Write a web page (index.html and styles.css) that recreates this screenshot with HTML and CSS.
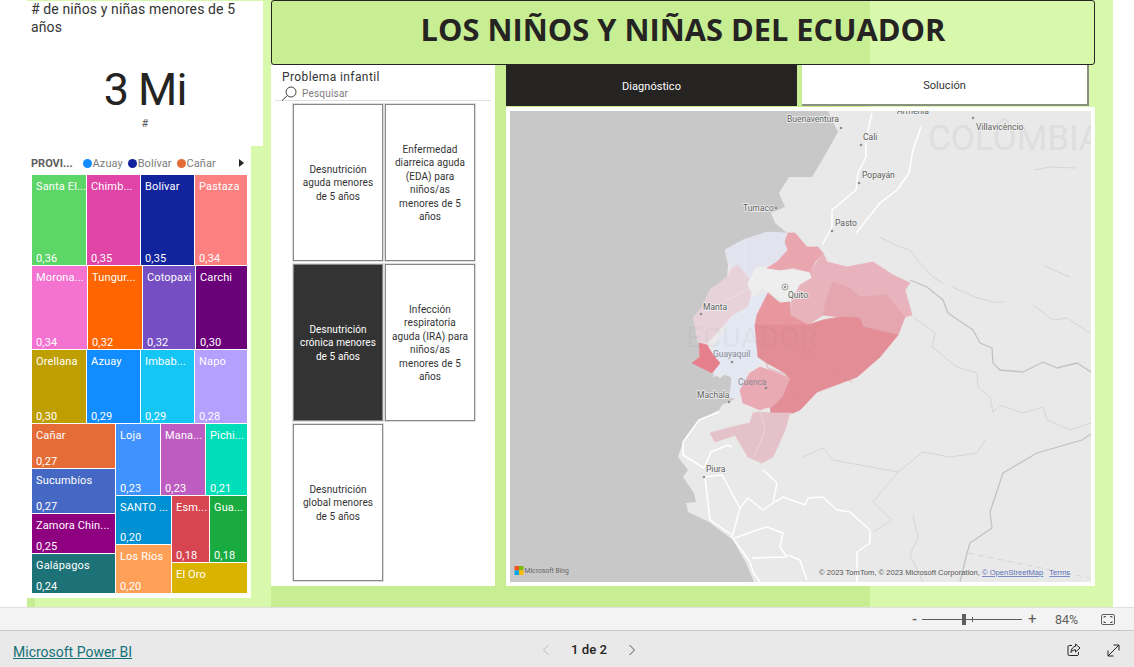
FILE: index.html
```html
<!DOCTYPE html>
<html lang="es">
<head>
<meta charset="utf-8">
<title>Los niños y niñas del Ecuador</title>
<link rel="stylesheet" href="styles.css">
</head>
<body>
<main class="canvas">
  <section class="left">
    <div class="kpi">
      <div class="kpi-title"># de niños y niñas menores de 5 años</div>
      <div class="kpi-value">3 Mi</div>
      <div class="kpi-unit">#</div>
    </div>
    <div class="tree-card">
      <div class="legend">
        <b>PROVI...</b>
        <span class="lg"><i class="dot c-azuay"></i>Azuay</span>
        <span class="lg"><i class="dot c-bolivar"></i>Bolívar</span>
        <span class="lg"><i class="dot c-canar"></i>Cañar</span>
        <span class="lg-next"></span>
      </div>
      <div class="tree">
        <div class="tr" style="height:90px">
          <div class="cell c-selena" style="width:54px"><span>Santa El...</span><span>0,36</span></div>
          <div class="cell c-chimb" style="width:53px"><span>Chimb...</span><span>0,35</span></div>
          <div class="cell c-bolivar" style="width:53px"><span>Bolívar</span><span>0,35</span></div>
          <div class="cell c-pastaza" style="width:52px"><span>Pastaza</span><span>0,34</span></div>
        </div>
        <div class="tr" style="height:83px">
          <div class="cell c-morona" style="width:55px"><span>Morona...</span><span>0,34</span></div>
          <div class="cell c-tungur" style="width:54px"><span>Tungur...</span><span>0,32</span></div>
          <div class="cell c-cotopaxi" style="width:52px"><span>Cotopaxi</span><span>0,32</span></div>
          <div class="cell c-carchi" style="width:51px"><span>Carchi</span><span>0,30</span></div>
        </div>
        <div class="tr" style="height:73px">
          <div class="cell c-orellana" style="width:54px"><span>Orellana</span><span>0,30</span></div>
          <div class="cell c-azuay" style="width:53px"><span>Azuay</span><span>0,29</span></div>
          <div class="cell c-imbab" style="width:53px"><span>Imbab...</span><span>0,29</span></div>
          <div class="cell c-napo" style="width:52px"><span>Napo</span><span>0,28</span></div>
        </div>
        <div class="tr tr-low">
          <div class="tc" style="width:83px">
            <div class="cell c-canar" style="height:44px"><span>Cañar</span><span>0,27</span></div>
            <div class="cell c-sucum" style="height:44px"><span>Sucumbíos</span><span>0,27</span></div>
            <div class="cell c-zamora" style="height:39px"><span>Zamora Chin...</span><span>0,25</span></div>
            <div class="cell c-galap" style="height:39px"><span>Galápagos</span><span>0,24</span></div>
          </div>
          <div class="tc" style="width:131px">
            <div class="tr" style="height:71px">
              <div class="cell c-loja" style="width:44px"><span>Loja</span><span>0,23</span></div>
              <div class="cell c-mana" style="width:44px"><span>Mana...</span><span>0,23</span></div>
              <div class="cell c-pichi" style="width:41px"><span>Pichi...</span><span>0,21</span></div>
            </div>
            <div class="tr" style="height:97px">
              <div class="tc" style="width:55px">
                <div class="cell c-santo" style="height:48px"><span>SANTO ...</span><span>0,20</span></div>
                <div class="cell c-rios" style="height:48px"><span>Los Ríos</span><span>0,20</span></div>
              </div>
              <div class="tc" style="width:75px">
                <div class="tr" style="height:66px">
                  <div class="cell c-esm" style="width:37px"><span>Esm...</span><span>0,18</span></div>
                  <div class="cell c-gua" style="width:37px"><span>Gua...</span><span>0,18</span></div>
                </div>
                <div class="cell c-oro" style="height:30px"><span>El Oro</span></div>
              </div>
            </div>
          </div>
        </div>
      </div>
    </div>
  </section>

  <section class="right">
    <h1 class="title">LOS NIÑOS Y NIÑAS DEL ECUADOR</h1>
    <div class="body">
      <aside class="slicer">
        <div class="slicer-title">Problema infantil</div>
        <div class="search">
          <svg class="search-ico" width="16" height="15" viewBox="0 0 16 15"><circle cx="10" cy="6" r="5"/><path d="M6.5 9.500 1 14.500"/></svg>
          <span>Pesquisar</span>
        </div>
        <div class="tiles">
          <div class="tile">Desnutrición aguda menores de 5 años</div>
          <div class="tile">Enfermedad diarreica aguda (EDA) para niños/as<br>menores de 5 años</div>
          <div class="tile tile-on">Desnutrición crónica menores de 5 años</div>
          <div class="tile">Infección respiratoria aguda (IRA) para niños/as<br>menores de 5 años</div>
          <div class="tile">Desnutrición global menores de 5 años</div>
        </div>
      </aside>
      <div class="main-col">
        <div class="tabs">
          <div class="tab tab-on">Diagnóstico</div>
          <div class="tab tab-off">Solución</div>
        </div>
        <div class="map-card">
          <svg class="map" viewBox="510 111 581 471" width="581" height="471">
            <rect class="land" x="510" y="111" width="581" height="471"/>
            <g class="soft">
              <polygon class="sea" points="510,111 828,111 838,132 824,157 812,177 789,177 779,193 785,207 771,213 775,223 787,233 767,232 743,240 725,250 728,265 727,278 710,290 702,307 693,318 695,325 698,342 699,345 700,357 692,363 700,367 712,373 720,378 728,372 733,382 729,397 735,399 722,405 719,410 699,420 683,442 678,457 688,470 683,477 694,493 696,502 686,503 688,512 709,522 733,540 746,563 754,582 510,582"/>
              <polyline class="bd-big" points="910,280 927,287 943,300 948,313 973,330 980,343 992,348 993,363 1000,370 1023,372 1043,362 1057,368 1077,363 1091,372"/>
              <polyline class="bd-big" points="1091,434 1082,440 1037,453 1003,473 990,512 992,528 970,543 967,553 960,582"/>
              <polyline class="bd" points="880,237 895,245 910,250 920,263 933,277 943,283"/>
              <polyline class="bd" points="952,287 975,297 993,302 1003,302"/>
              <polyline class="bd" points="1033,305 1053,320 1067,318 1090,333"/>
              <polyline class="bd" points="913,317 935,333 932,347 957,367 977,373 978,387 990,397 993,412 1000,405 1023,413 1043,407 1047,420 1070,430 1091,423"/>
              <polyline class="bd" points="803,457 823,448 833,460 898,472 923,452 950,457 977,453 985,440"/>
              <polyline class="bd" points="898,472 873,502 892,520 873,532"/>
              <polyline class="bd" points="913,515 918,537 910,555 923,582"/>
              <polyline class="bd" points="1045,266 1060,273 1070,277"/>
              <polyline class="bd" points="1034,170 1050,167 1076,168"/>
              <polyline class="bd" points="968,553 1090,578" stroke-dasharray="6 4"/>
              <polyline class="road" points="921,127 913,150 909,173 897,190 880,203 856,233"/>
              <polyline class="road" points="872,113 866,140 866,157 858,173 856,190 832,210 832,227 822,245"/>
              <polyline class="road" points="719,412 699,420 683,442 683,455 704,468 711,452 728,445 732,447"/>
              <polyline class="road" points="703,477 722,475 740,508 732,537 750,562 753,572 760,582"/>
              <polyline class="road" points="705,477 710,520 732,535"/>
              <polyline class="road" points="740,508 748,498 763,510 773,503 777,483 763,470"/>
              <polyline class="road" points="775,502 783,497 805,505 808,498 823,497 837,510 850,512 870,530 870,543 857,552 857,582"/>
              <polyline class="road" points="735,538 757,530 767,527 783,533 780,547 787,557 752,558"/>
              <polyline class="road" points="788,555 800,560 807,580"/>
            </g>
            <text class="ghost" x="928" y="150">COLÔMBIA</text>
            <g class="soft">
              <polygon class="prov p-esm" points="725,250 743,240 767,232 785,233 790,250 780,262 767,265 757,268 750,280 743,272 732,267 728,260"/>
              <polygon class="prov p-man" points="738,265 750,280 752,288 748,307 732,315 722,327 707,343 698,342 695,325 693,318 702,307 710,290 727,277 732,268"/>
              <polygon class="prov p-gua" points="753,297 768,293 757,315 755,325 758,350 763,360 757,367 748,370 738,397 730,397 732,377 720,373 713,377 720,363 712,350 722,333 732,317 748,307"/>
              <polygon class="prov p-se" points="699,343 707,345 713,355 720,363 712,373 700,367 692,363 700,357"/>
              <polygon class="prov p-pic" points="757,267 780,270 807,272 812,278 800,285 792,300 783,300 772,292 762,288 753,297 748,283"/>
              <polygon class="prov p-car" points="788,233 795,233 807,247 818,247 823,253 815,262 810,272 793,268 780,270 767,268 777,262 788,250 785,242"/>
              <polygon class="prov p-suc" points="810,272 823,253 827,262 847,267 873,262 893,275 910,283 905,290 912,315 905,317 887,295 860,297 850,288 833,282 812,278"/>
              <polygon class="prov p-nap" points="812,278 833,282 827,297 823,315 808,325 790,315 792,300 800,285"/>
              <polygon class="prov p-ore" points="833,282 850,288 860,297 887,295 905,317 898,335 863,327 860,318 840,317 823,315 827,297"/>
              <polygon class="prov p-cot" points="768,293 780,303 790,302 790,315 808,325 755,325 757,315"/>
              <polygon class="prov p-pas" points="808,325 823,320 840,317 860,318 863,327 898,335 880,357 857,377 817,392 800,410 793,413 771,413 770,405 780,397 788,377 785,373 767,363 758,357 755,325"/>
              <polygon class="prov p-azu" points="750,373 760,367 775,372 790,378 782,397 772,407 765,408 760,410 753,407 743,403 740,390"/>
              <polygon class="prov p-zam" points="760,412 772,413 790,413 785,430 773,457 762,463 748,457 735,435 715,442 710,433 732,427 750,423 753,413"/>
              <polyline class="inner" points="760,325 762,350 768,368 787,375"/>
              <polyline class="inner" points="788,350 812,355 840,375 852,382"/>
              <polyline class="inner" points="810,355 800,385 790,405"/>
              <polyline class="inner-w" points="727,300 750,288 748,283 757,270"/>
              <polyline class="inner-w" points="760,410 765,430 755,455"/>
              <polyline class="inner-w" points="745,240 745,270"/>
            </g>
            <text class="ghost ghost-ec" x="686" y="347">ECUADOR</text>
            <g class="labels">
              <text x="787" y="122">Buenaventura</text>
              <text x="863" y="140">Cali</text>
              <text x="862" y="178">Popayán</text>
              <text x="976" y="130">Villavicêncio</text>
              <text x="897" y="114">Armenia</text>
              <text x="743" y="211">Tumaco</text>
              <text x="835" y="226">Pasto</text>
              <text x="703" y="310">Manta</text>
              <text x="788" y="298">Quito</text>
              <text class="lb-lite" x="713" y="357">Guayaquil</text>
              <text class="lb-lite" x="738" y="385">Cuenca</text>
              <text x="697" y="398">Machala</text>
              <text x="706" y="472">Piura</text>
            </g>
            <g class="pts">
              <circle cx="776" cy="208" r="1.300"/><circle cx="832" cy="231" r="1.300"/><circle cx="701" cy="314" r="1.300"/>
              <circle cx="732" cy="362" r="1.300"/><circle cx="766" cy="388" r="1.300"/><circle cx="729" cy="402" r="1.300"/>
              <circle cx="704" cy="477" r="1.300"/><circle cx="841" cy="128" r="1.300"/><circle cx="861" cy="145" r="1.300"/>
              <circle cx="859" cy="183" r="1.300"/><circle cx="973" cy="118" r="1.300"/>
            </g>
            <circle class="capital" cx="785" cy="287" r="3"/><circle class="pts" cx="785" cy="287" r="1.200"/>
            <g>
              <rect class="b1" x="514.500" y="566" width="4.500" height="4.500"/><rect class="b2" x="519" y="566" width="4.500" height="4.500"/>
              <rect class="b3" x="514.500" y="570.500" width="4.500" height="4.500"/><rect class="b4" x="519" y="570.500" width="4.500" height="4.500"/>
              <text class="bing" x="524.500" y="573">Microsoft Bing</text>
            </g>
            <text class="attr" x="819" y="575">© 2023 TomTom, © 2023 Microsoft Corporation, <tspan class="attr-link">© OpenStreetMap</tspan><tspan class="attr-link" dx="6">Terms</tspan></text>
          </svg>
        </div>
      </div>
    </div>
  </section>
</main>

<div class="zoombar">
  <span class="z-minus">-</span>
  <div class="z-track"><i class="z-thumb"></i><i class="z-tick"></i></div>
  <span class="z-plus">+</span>
  <span class="z-pct">84%</span>
  <svg class="z-fit" width="14" height="11" viewBox="0 0 14 11"><rect x=".5" y=".5" width="13" height="10" rx="1.500"/><path class="z-fit-c" d="M3 4V2.500h2M9 2.500h2V4M11 7v1.500H9M5 8.500H3V7"/></svg>
</div>

<footer class="footer">
  <a class="pbi" href="#">Microsoft Power BI</a>
  <div class="pager">
    <svg class="chev chev-off" width="8" height="12" viewBox="0 0 8 12"><path d="M6.500 1 1.500 6l5 5"/></svg>
    <span>1 de 2</span>
    <svg class="chev" width="8" height="12" viewBox="0 0 8 12"><path d="M1.500 1l5 5-5 5"/></svg>
  </div>
  <div class="actions">
    <svg class="act" width="14" height="14" viewBox="0 0 14 14"><path d="M5 2.500H2.200A1.200 1.200 0 0 0 1 3.700v7.600a1.200 1.200 0 0 0 1.200 1.200h8a1.200 1.200 0 0 0 1.200-1.200V9"/><path d="M8.500 1 13 5 8.500 9V6.800C6.500 6.800 5 7.500 4 9.500 4 6 6 3.500 8.500 3.300z"/></svg>
    <svg class="act" width="13" height="13" viewBox="0 0 13 13"><path d="M1 12 12 1M6.500 1H12v5.500M1 6.500V12h5.500"/></svg>
  </div>
</footer>
</body>
</html>
```
FILE: styles.css
```css
* { box-sizing: border-box; }
html, body { margin: 0; padding: 0; }
body {
  width: 1134px;
  height: 667px;
  overflow: hidden;
  background: #fff;
  font-family: Roboto, "Liberation Sans", sans-serif;
  color: #252423;
}

/* canvas */
.canvas {
  margin-left: 27px;
  width: 1086px;
  height: 607px;
  display: flex;
  gap: 8px;
  background:
    linear-gradient(#c7ee92, #c7ee92) 0 100% / 8px 9px no-repeat,
    linear-gradient(to right, #d8f8ab 0 244px, #c7ee92 244px 843px, #d8f8ab 843px);
}
.left { width: 236px; padding-top: 1px; display: flex; flex-direction: column; }
.right { width: 824px; }

/* KPI */
.kpi {
  height: 145px;
  background: #fff;
  padding: 0 4px;
  display: flex;
  flex-direction: column;
}
.kpi-title { font-size: 14px; line-height: 18px; letter-spacing: .12px; color: #333; margin-top: -1px; }
.kpi-value { font-size: 45px; line-height: 52px; text-align: center; margin-top: 28px; letter-spacing: -1px; font-weight: 400; }
.kpi-unit { font-size: 11px; line-height: 13px; text-align: center; margin-top: 1px; color: #555; }

/* treemap */
.tree-card { width: 224px; height: 452px; background: #fff; padding: 0 4px; }
.legend {
  height: 29px;
  padding-top: 5px;
  display: flex;
  align-items: center;
  font-size: 11px;
  color: #7b7b7b;
  position: relative;
}
.legend b { color: #605e5c; margin-right: 10px; }
.lg { display: inline-flex; align-items: center; gap: 1px; margin-right: 5px; letter-spacing: .05px; }
.dot { width: 9px; height: 9px; border-radius: 50%; display: block; }
.lg-next {
  position: absolute;
  left: 208px;
  top: 13px;
  border-left: 5px solid #252423;
  border-top: 4px solid transparent;
  border-bottom: 4px solid transparent;
}
.tree { margin-left: 1px; width: 215px; height: 418px; display: flex; flex-direction: column; gap: 1px; }
.tr { display: flex; gap: 1px; flex: none; }
.tr-low { height: 169px; }
.tc { display: flex; flex-direction: column; gap: 1px; flex: none; }
.cell {
  flex: none;
  display: flex;
  flex-direction: column;
  justify-content: space-between;
  padding: 5px 2px 0 4px;
  color: #fff;
  font-size: 11px;
  line-height: 13px;
  white-space: nowrap;
  overflow: hidden;
  letter-spacing: .15px;
}
.c-selena { background: #5bd667; }
.c-chimb { background: #e044a7; }
.c-bolivar { background: #12239e; }
.c-pastaza { background: #fd8080; }
.c-morona { background: #f472d0; }
.c-tungur { background: #ff6500; }
.c-cotopaxi { background: #744ec2; }
.c-carchi { background: #6b007b; }
.c-orellana { background: #bf9f00; }
.c-azuay { background: #118dff; }
.c-imbab { background: #15c6f4; }
.c-napo { background: #b3a0ff; }
.c-canar { background: #e66c37; }
.c-sucum { background: #4668c5; }
.c-zamora { background: #8f0080; }
.c-galap { background: #1c7277; }
.c-loja { background: #4092ff; }
.c-mana { background: #bd5cc1; }
.c-pichi { background: #00ddb9; }
.c-santo { background: #0091d5; }
.c-esm { background: #d64550; }
.c-gua { background: #1aab40; }
.c-rios { background: #ffa058; }
.c-oro { background: #d9b300; }

/* title */
.title {
  margin: 0;
  height: 65px;
  border: 1px solid #252423;
  border-radius: 3px;
  display: flex;
  align-items: center;
  justify-content: center;
  font-family: "Open Sans", "Noto Sans", sans-serif;
  font-size: 30.800px;
  font-weight: 700;
  color: #252423;
  padding: 0 0 7px 0;
}

.body { display: flex; gap: 11px; }

/* slicer */
.slicer { width: 224px; height: 521px; background: #fff; padding: 5px 4px 0; }
.slicer-title { font-size: 12px; line-height: 15px; padding-left: 7px; letter-spacing: .4px; color: #333; }
.search {
  display: flex;
  align-items: center;
  gap: 5px;
  height: 16px;
  padding: 1px 0 0 6px;
  font-size: 10px;
  color: #7c7c7c;
  letter-spacing: .2px;
  border-bottom: 1px solid #e0e0e0;
}
.search-ico { flex: none; margin-top: 1px; }
.search-ico circle, .search-ico path { fill: none; stroke: #444; stroke-width: 1; }
.tiles {
  margin: 3px 0 0 18px;
  display: grid;
  grid-template-columns: 90px 90px;
  grid-auto-rows: 157px;
  column-gap: 2px;
  row-gap: 3px;
}
.tile {
  display: block;
  align-content: center;
  text-align: center;
  padding: 1px 4px 0;
  border: 1px solid #888;
  box-shadow: 0 0 0 1px #ddd;
  font-size: 10px;
  line-height: 13.500px;
  letter-spacing: .1px;
  background: #fff;
  color: #333;
}
.tile-on { background: #333; color: #fff; }

/* tabs & map */
.main-col { width: 589px; }
.tabs { display: flex; gap: 5px; height: 42px; }
.tab {
  height: 41px;
  display: flex;
  align-items: center;
  justify-content: center;
  padding-top: 2px;
  font-size: 11px;
  letter-spacing: .05px;
}
.tab-on { width: 291px; background: #252423; color: #fff; }
.tab-off { width: 287px; background: #fff; color: #333; border-right: 2px solid #8a8f80; border-bottom: 2px solid #8a8f80; }
.map-card { width: 589px; height: 479px; background: #fff; padding: 4px; }
.map { display: block; }
.land { fill: #e9e9e9; }
.soft { filter: blur(.4px); }
.sea { fill: #c8c8c8; }
.bd, .bd-big, .road, .inner, .inner-w { fill: none; stroke-linejoin: round; }
.bd { stroke: #d0d0d0; stroke-width: .8; }
.bd-big { stroke: #c2c2c2; stroke-width: 1.300; }
.road { stroke: #fff; stroke-width: 1.500; }
.inner { stroke: #db8f99; stroke-width: .6; }
.inner-w { stroke: #f3f3f6; stroke-width: .9; opacity: .45; }
.ghost { font-family: Roboto, sans-serif; font-size: 35px; fill: #dedede; }
.ghost-ec { fill: rgba(110, 110, 110, .07); font-size: 28px; letter-spacing: 1px; }
.prov { fill: currentColor; stroke: currentColor; stroke-width: .8; stroke-linejoin: round; }
.p-esm { color: #e2e3ee; }
.p-man { color: #e8d2da; }
.p-gua { color: #e3e8f2; }
.p-se { color: #e67f8c; }
.p-pic { color: #eeeeee; }
.p-car { color: #e9a6af; }
.p-suc { color: #e9b3bd; }
.p-nap { color: #e9b3bc; }
.p-ore { color: #e5a6b0; }
.p-cot { color: #e8979f; }
.p-pas { color: #e38d96; }
.p-azu { color: #e9aab4; }
.p-zam { color: #e5c1ca; }
.labels text {
  font-family: Roboto, sans-serif;
  font-size: 8.500px;
  fill: #5e5e5e;
  stroke: #f1f1f1;
  stroke-width: 1.500px;
  paint-order: stroke;
}
.labels .lb-lite { fill: #8b8b96; stroke: none; }
.pts { fill: #8e8e8e; }
.capital { fill: none; stroke: #8e8e8e; stroke-width: .8; }
.b1 { fill: #f25022; } .b2 { fill: #7fba00; } .b3 { fill: #00a4ef; } .b4 { fill: #ffb900; }
.bing { font-family: Roboto, sans-serif; font-size: 6.800px; fill: #666; }
.attr { font-family: "Liberation Sans", sans-serif; font-size: 7.600px; fill: #555; }
.attr-link { fill: #5a6fb8; text-decoration: underline; }

/* zoom bar */
.zoombar {
  height: 24px;
  background: #f3f3f3;
  border-top: 1px solid #e0e0e0;
  border-bottom: 1px solid #c8c8c8;
  display: flex;
  align-items: center;
  color: #605e5c;
  padding-left: 912px;
  font-size: 12px;
}
.z-minus { width: 10px; font-weight: 700; font-size: 13px; }
.z-track { position: relative; width: 100px; height: 1px; background: #605e5c; }
.z-thumb { position: absolute; left: 40px; top: -5px; width: 4px; height: 11px; background: #605e5c; }
.z-tick { position: absolute; left: 50px; top: -2px; width: 1px; height: 5px; background: #605e5c; }
.z-plus { margin-left: 6px; width: 12px; font-size: 15px; line-height: 15px; }
.z-pct { margin-left: 15px; width: 28px; font-size: 12.500px; }
.z-fit { margin-left: 18px; }
.z-fit rect, .z-fit-c { fill: none; stroke: #605e5c; stroke-width: 1; }

/* footer */
.footer {
  height: 36px;
  background: #e9e9e9;
  display: flex;
  align-items: center;
  position: relative;
  padding: 5px 0 0 13px;
  color: #252423;
}
.pbi { font-size: 14px; color: #117178; text-decoration: underline; }
.pager {
  position: absolute;
  left: 542px;
  top: 12px;
  display: flex;
  align-items: center;
  gap: 21px;
  font-size: 13.200px;
  font-weight: 500;
  line-height: 14px;
}
.chev path { fill: none; stroke: #555; stroke-width: 1; }
.chev-off path { stroke: #bdbdbd; }
.actions { position: absolute; left: 1067px; top: 12px; display: flex; gap: 26px; align-items: center; }
.act path { fill: none; stroke: #252423; stroke-width: 1; }
```
